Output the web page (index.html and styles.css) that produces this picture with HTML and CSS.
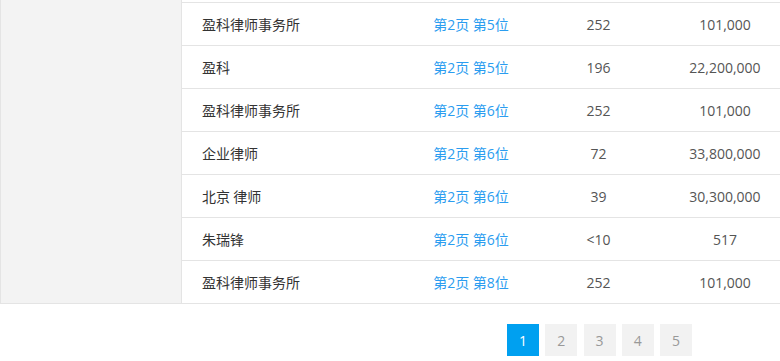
FILE: index.html
```html
<!DOCTYPE html>
<html lang="zh-CN">
<head>
<meta charset="utf-8">
<link rel="stylesheet" href="styles.css">
</head>
<body>
<div class="layout">
  <aside class="sidebar"></aside>
  <div class="table">
    <div class="row"><span class="name">盈科律师事务所</span><span class="rank">第2页 第5位</span><span class="num">252</span><span class="num">101,000</span></div>
    <div class="row"><span class="name">盈科</span><span class="rank">第2页 第5位</span><span class="num">196</span><span class="num">22,200,000</span></div>
    <div class="row"><span class="name">盈科律师事务所</span><span class="rank">第2页 第6位</span><span class="num">252</span><span class="num">101,000</span></div>
    <div class="row"><span class="name">企业律师</span><span class="rank">第2页 第6位</span><span class="num">72</span><span class="num">33,800,000</span></div>
    <div class="row"><span class="name">北京 律师</span><span class="rank">第2页 第6位</span><span class="num">39</span><span class="num">30,300,000</span></div>
    <div class="row"><span class="name">朱瑞锋</span><span class="rank">第2页 第6位</span><span class="num">&lt;10</span><span class="num">517</span></div>
    <div class="row"><span class="name">盈科律师事务所</span><span class="rank">第2页 第8位</span><span class="num">252</span><span class="num">101,000</span></div>
  </div>
</div>
<nav class="pager">
  <a class="page active">1</a>
  <a class="page">2</a>
  <a class="page">3</a>
  <a class="page">4</a>
  <a class="page">5</a>
</nav>
</body>
</html>
```
FILE: styles.css
```css
html, body {
  margin: 0;
  padding: 0;
  background: #fff;
  overflow: hidden;
}
body {
  width: 780px;
  height: 361px;
  font-family: "Open Sans", "Noto Sans CJK SC", sans-serif;
  font-size: 14px;
  color: #333;
}
.layout {
  display: flex;
  width: 780px;
}
.sidebar {
  box-sizing: border-box;
  width: 182px;
  flex: none;
  background: #f3f3f3;
  border-left: 1px solid #e4e4e4;
  border-right: 1px solid #e4e4e4;
  border-bottom: 1px solid #e4e4e4;
}
.table {
  flex: 1;
  min-width: 0;
  overflow: hidden;
  margin-top: 2px;
  border-top: 1px solid #e4e4e4;
}
.row {
  display: grid;
  grid-template-columns: 225px 128px 127px 126px;
  height: 42px;
  align-items: center;
  border-bottom: 1px solid #e4e4e4;
}
.name {
  padding-left: 20px;
  font-family: "Noto Sans CJK SC", sans-serif;
  color: #333;
  font-size: 14px;
}
.rank {
  text-align: center;
  color: #2b9df0;
  font-family: "Open Sans", "Noto Sans CJK SC", sans-serif;
}
.num {
  text-align: center;
  color: #555;
}
.pager {
  display: flex;
  gap: 6.25px;
  padding-left: 507px;
  margin-top: 20px;
}
.page {
  width: 32px;
  height: 32px;
  display: flex;
  align-items: center;
  justify-content: center;
  background: #f2f2f2;
  color: #999;
  font-size: 14px;
}
.page.active {
  background: #00a0f0;
  color: #fff;
}
```
